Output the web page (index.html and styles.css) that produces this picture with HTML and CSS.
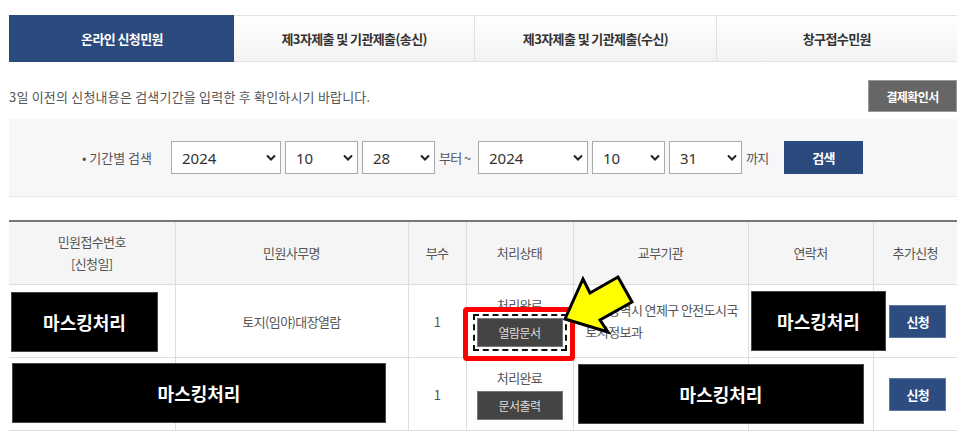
FILE: index.html
```html
<!DOCTYPE html>
<html>
<head>
  <title>신청민원 조회</title>
  <meta charset="UTF-8">
  <link rel="stylesheet" href="styles.css">
</head>
<body>
  <div class="page">

    <!-- Tabs -->
    <nav class="tabs">
      <a class="tab active" href="#">온라인 신청민원</a>
      <a class="tab" href="#">제3자제출 및 기관제출(송신)</a>
      <a class="tab" href="#">제3자제출 및 기관제출(수신)</a>
      <a class="tab" href="#">창구접수민원</a>
    </nav>

    <div class="notice-row">
      <p class="notice">3일 이전의 신청내용은 검색기간을 입력한 후 확인하시기 바랍니다.</p>
      <button class="btn-gray">결제확인서</button>
    </div>

    <!-- Search box -->
    <div class="search-box">
      <span class="search-label">• 기간별 검색</span>
      <select class="sel year"><option>2024</option></select>
      <select class="sel"><option>10</option></select>
      <select class="sel"><option>28</option></select>
      <span class="between">부터 ~</span>
      <select class="sel year"><option>2024</option></select>
      <select class="sel"><option>10</option></select>
      <select class="sel"><option>31</option></select>
      <span class="until">까지</span>
      <button class="btn-search">검색</button>
    </div>

    <!-- Result table -->
    <div class="result">
      <table class="list">
        <colgroup>
          <col style="width:166px">
          <col style="width:233px">
          <col style="width:58px">
          <col style="width:107px">
          <col style="width:175px">
          <col style="width:125px">
          <col style="width:84px">
        </colgroup>
        <thead>
          <tr>
            <th>민원접수번호<br>[신청일]</th>
            <th>민원사무명</th>
            <th>부수</th>
            <th>처리상태</th>
            <th>교부기관</th>
            <th>연락처</th>
            <th>추가신청</th>
          </tr>
        </thead>
        <tbody>
          <tr>
            <td></td>
            <td>토지(임야)대장열람</td>
            <td>1</td>
            <td>
              <div class="state">처리완료</div>
              <button class="btn-doc outlined">열람문서</button>
            </td>
            <td class="office">부산광역시 연제구 안전도시국<br>토지정보과</td>
            <td></td>
            <td><button class="btn-apply">신청</button></td>
          </tr>
          <tr>
            <td></td>
            <td></td>
            <td>1</td>
            <td>
              <div class="state">처리완료</div>
              <button class="btn-doc">문서출력</button>
            </td>
            <td></td>
            <td></td>
            <td><button class="btn-apply">신청</button></td>
          </tr>
        </tbody>
      </table>

      <!-- masking overlays -->
      <div class="mask m1">마스킹처리</div>
      <div class="mask m2">마스킹처리</div>
      <div class="mask m3">마스킹처리</div>
      <div class="mask m4">마스킹처리</div>

      <!-- highlight -->
      <div class="highlight"></div>
      <svg class="arrow" width="80" height="70" viewBox="0 0 80 70">
        <polygon points="5,49 23,9 30,23 58,7 72,32 40,50 48,62" fill="#ffff00" stroke="#000" stroke-width="3" stroke-linejoin="miter"/>
      </svg>
    </div>

  </div>
</body>
</html>
```

FILE: styles.css
```css
  html, body {
    margin: 0;
    background: #fff;
  }

  body {
    font-family: "Noto Sans CJK KR", "Noto Sans", sans-serif;
    font-size: 13px;
    color: #555;
    letter-spacing: -0.6px;
  }

  .page {
    width: 948px;
    margin-left: 9px;
  }

  /* Tabs */
  .tabs {
    display: flex;
    margin-top: 15px;
    height: 47px;
  }

  .tab {
    flex: 1;
    display: flex;
    align-items: center;
    justify-content: center;
    text-decoration: none;
    font-weight: bold;
    font-size: 13px;
    color: #333;
    background: linear-gradient(#fff, #f3f3f3);
    border-top: 1px solid #e2e2e2;
    border-bottom: 1px solid #e2e2e2;
    border-left: 1px solid #e2e2e2;
  }

  .tab.active {
    flex: 0 0 224px;
    color: #fff;
    background: #2b4a7d;
    border-color: #2b4a7d;
  }

  .tab.active + .tab {
    border-left: none;
  }

  /* Notice line */
  .notice-row {
    display: flex;
    align-items: center;
    justify-content: space-between;
    margin-top: 18px;
  }

  .notice {
    margin: 0;
    font-size: 13px;
    color: #555;
    letter-spacing: 0.2px;
  }

  .btn-gray {
    width: 89px;
    height: 32px;
    border: 1px solid #999;
    background: #666;
    color: #fff;
    font-family: inherit;
    font-weight: bold;
    font-size: 12px;
    letter-spacing: -0.6px;
  }

  /* Search box */
  .search-box {
    display: flex;
    align-items: center;
    margin-top: 7px;
    height: 78px;
    box-sizing: border-box;
    padding-left: 73px;
    background: #f7f7fa;
    border-bottom: 1px solid #e6e6e6;
  }

  .search-label {
    width: 89px;
    color: #555;
    letter-spacing: 0;
  }

  .sel {
    appearance: none;
    -webkit-appearance: none;
    width: 73px;
    height: 33px;
    margin-right: 4px;
    padding-left: 10px;
    border: 1px solid #aaa;
    border-radius: 0;
    background: #fff url("data:image/svg+xml,%3Csvg xmlns='http://www.w3.org/2000/svg' width='10' height='7' viewBox='0 0 10 7'%3E%3Cpath d='M1 1.5 L5 5.5 L9 1.5' fill='none' stroke='%23222' stroke-width='2'/%3E%3C/svg%3E") no-repeat right 4px center;
    font-family: "Noto Sans", sans-serif;
    font-size: 15px;
    color: #333;
    letter-spacing: 0;
  }

  .sel.year {
    width: 110px;
  }

  .between {
    width: 39px;
    color: #555;
  }

  .until {
    width: 38px;
    color: #555;
  }

  .btn-search {
    width: 79px;
    height: 33px;
    border: none;
    background: #2b4a7d;
    color: #fff;
    font-family: inherit;
    font-weight: bold;
    font-size: 13px;
    letter-spacing: -0.6px;
  }

  /* Result table */
  .result {
    position: relative;
    margin-top: 23px;
  }

  .list {
    width: 948px;
    border-collapse: collapse;
    table-layout: fixed;
    border-top: 2px solid #777;
  }

  .list th {
    height: 62px;
    padding: 0;
    background: #f5f5f5;
    font-weight: normal;
    color: #555;
    line-height: 22px;
    border-left: 1px solid #ddd;
    border-bottom: 1px solid #ddd;
  }

  .list td {
    height: 72px;
    padding: 0;
    text-align: center;
    color: #555;
    border-left: 1px solid #ddd;
    border-bottom: 1px solid #ddd;
  }

  .list th:first-child,
  .list td:first-child {
    border-left: none;
  }

  .list td.office {
    text-align: left;
    padding-left: 12px;
    line-height: 22px;
  }

  .state {
    line-height: 18px;
    margin-bottom: 4px;
  }

  .btn-doc {
    width: 86px;
    height: 29px;
    border: 1px solid #777;
    background: #444;
    color: #ddd;
    font-family: inherit;
    font-size: 12px;
    letter-spacing: -0.6px;
  }

  .btn-doc.outlined {
    outline: 2px dashed #111;
    outline-offset: 2px;
  }

  .btn-apply {
    width: 57px;
    height: 33px;
    margin-left: 5px;
    border: 1px solid #5d77a2;
    background: #2d4d80;
    color: #fff;
    font-family: inherit;
    font-weight: bold;
    font-size: 13px;
    letter-spacing: -0.6px;
  }

  /* Masks laid over the personal data */
  .mask {
    position: absolute;
    display: flex;
    align-items: center;
    justify-content: center;
    height: 60px;
    box-sizing: border-box;
    background: #000;
    border: 1px solid #444;
    color: #fff;
    font-weight: bold;
    font-size: 18px;
    letter-spacing: 0;
  }

  .m1 { left: 2px; top: 72px; width: 147px; }
  .m2 { left: 742px; top: 71px; width: 135px; }
  .m3 { left: 3px; top: 143px; width: 374px; }
  .m4 { left: 569px; top: 144px; width: 286px; }

  .highlight {
    position: absolute;
    left: 454px;
    top: 87px;
    width: 112px;
    height: 54px;
    box-sizing: border-box;
    border: 5px solid #ff0000;
    border-radius: 4px;
  }

  .arrow {
    position: absolute;
    left: 551px;
    top: 50px;
  }
```
